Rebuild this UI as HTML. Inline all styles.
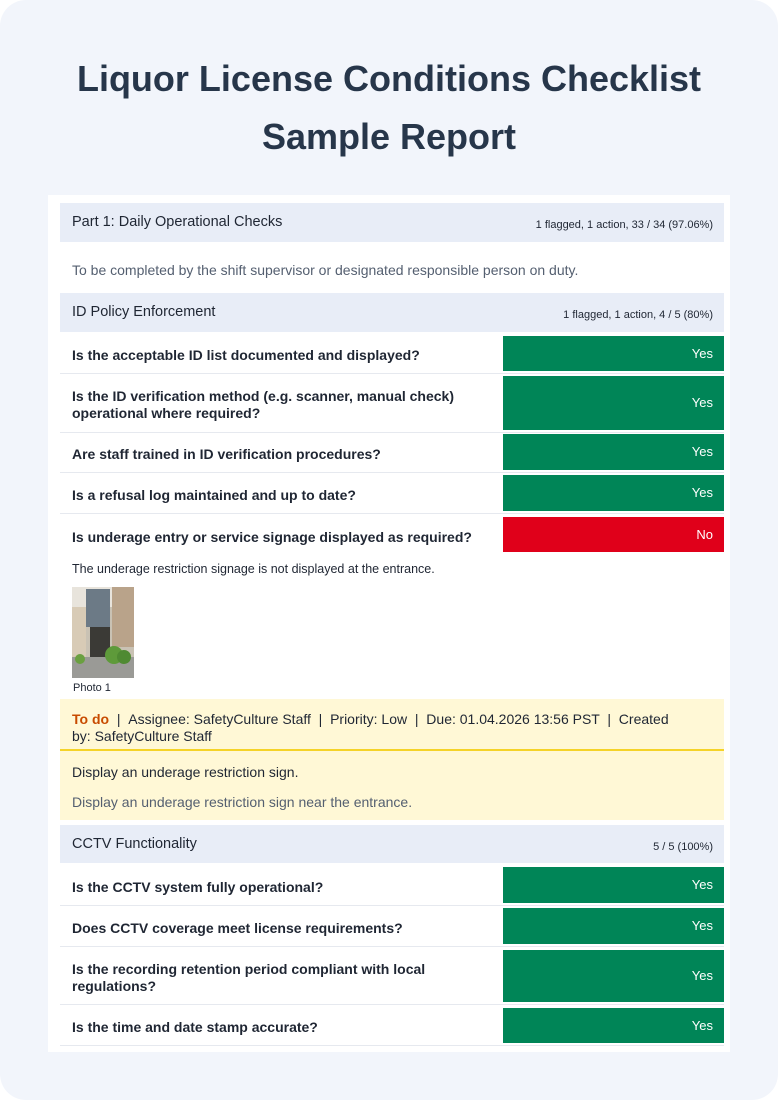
<!DOCTYPE html><html><head><style>
*{margin:0;padding:0;box-sizing:border-box}
body{width:778px;height:1100px;background:#fff;font-family:"Liberation Sans",sans-serif;position:relative;overflow:hidden}
.bg{position:absolute;left:0;top:0;width:778px;height:1100px;background:#f2f5fb;border-radius:26px}
h1{position:absolute;left:0;width:778px;top:50px;text-align:center;font-size:36px;line-height:58px;color:#27364a;font-weight:bold}
.card{position:absolute;left:48px;top:195px;width:682px;height:857px;background:#fff}
.a{position:absolute}
.hdr{position:absolute;left:12px;width:664px;background:#e8edf7;color:#1f2633;font-size:14.5px}
.hdr .t{position:absolute;left:12px;top:11px}
.hdr .s{position:absolute;right:11px;font-size:11px;color:#1f2633}
.q{position:absolute;left:24px;width:420px;font-size:14px;font-weight:bold;color:#1f2633;line-height:17px}
.ans{position:absolute;left:455px;width:221px;color:#fff;font-size:13px;text-align:right;padding-right:11px}
.g{background:#008557}.r{background:#e0001a}
.ln{position:absolute;left:12px;width:664px;height:1px;background:#e6e9ef}
</style></head><body>
<div class="bg"></div>
<h1>Liquor License Conditions Checklist<br>Sample Report</h1>
<div class="card">
<div class="hdr" style="top:8px;height:39px"><span class="t">Part 1: Daily Operational Checks</span><span class="s" style="top:16px">1 flagged, 1 action, 33 / 34 (97.06%)</span></div>
<div class="a" style="left:24px;top:67px;font-size:14px;color:#545f70">To be completed by the shift supervisor or designated responsible person on duty.</div>
<div class="hdr" style="top:98px;height:39px"><span class="t">ID Policy Enforcement</span><span class="s" style="top:16px">1 flagged, 1 action, 4 / 5 (80%)</span></div>

<div class="q" style="top:152px">Is the acceptable ID list documented and displayed?</div>
<div class="ans g" style="top:141px;height:35px;line-height:35px">Yes</div>
<div class="ln" style="top:178px"></div>
<div class="q" style="top:193px">Is the ID verification method (e.g. scanner, manual check) operational where required?</div>
<div class="ans g" style="top:181px;height:54px;line-height:54px">Yes</div>
<div class="ln" style="top:237px"></div>
<div class="q" style="top:251px">Are staff trained in ID verification procedures?</div>
<div class="ans g" style="top:239px;height:36px;line-height:36px">Yes</div>
<div class="ln" style="top:277px"></div>
<div class="q" style="top:292px">Is a refusal log maintained and up to date?</div>
<div class="ans g" style="top:280px;height:36px;line-height:36px">Yes</div>
<div class="ln" style="top:318px"></div>
<div class="q" style="top:334px">Is underage entry or service signage displayed as required?</div>
<div class="ans r" style="top:322px;height:35px;line-height:35px">No</div>
<div class="a" style="left:24px;top:367px;font-size:12.5px;color:#1f2633">The underage restriction signage is not displayed at the entrance.</div>
<svg class="a" style="left:24px;top:392px" width="62" height="91" viewBox="0 0 62 91">
<rect width="62" height="91" fill="#c9c2b4"/><rect x="0" y="0" width="62" height="20" fill="#e8e4dc"/>
<rect x="14" y="2" width="24" height="38" fill="#6c7a86"/><rect x="40" y="0" width="22" height="60" fill="#b9a38a"/>
<rect x="0" y="20" width="14" height="50" fill="#d8cbb6"/><rect x="18" y="40" width="20" height="30" fill="#3b3a36"/>
<rect x="0" y="70" width="62" height="21" fill="#9a9a96"/><circle cx="42" cy="68" r="9" fill="#5e9a3a"/><circle cx="52" cy="70" r="7" fill="#4f8a32"/><circle cx="8" cy="72" r="5" fill="#6aa040"/></svg>
<div class="a" style="left:25px;top:487px;font-size:11px;color:#1f2633">Photo 1</div>
<div class="a" style="left:12px;top:504px;width:664px;height:52px;background:#fff8d6;border-bottom:2px solid #f5d328;font-size:14px;color:#1f2633;padding:12px 40px 12px 12px;line-height:17px"><b style="color:#c84b00">To do</b> &nbsp;| &nbsp;Assignee: SafetyCulture Staff &nbsp;| &nbsp;Priority: Low &nbsp;| &nbsp;Due: 01.04.2026 13:56 PST &nbsp;| &nbsp;Created by: SafetyCulture Staff</div>
<div class="a" style="left:12px;top:556px;width:664px;height:69px;background:#fff8d6;font-size:14px;padding:13px 12px">
<div style="color:#1f2633">Display an underage restriction sign.</div>
<div style="color:#545f70;margin-top:14px">Display an underage restriction sign near the entrance.</div></div>
<div class="hdr" style="top:630px;height:38px"><span class="t">CCTV Functionality</span><span class="s" style="top:16px">5 / 5 (100%)</span></div>
<div class="q" style="top:684px">Is the CCTV system fully operational?</div>
<div class="ans g" style="top:672px;height:36px;line-height:36px">Yes</div>
<div class="ln" style="top:710px"></div>
<div class="q" style="top:725px">Does CCTV coverage meet license requirements?</div>
<div class="ans g" style="top:713px;height:36px;line-height:36px">Yes</div>
<div class="ln" style="top:751px"></div>
<div class="q" style="top:766px">Is the recording retention period compliant with local regulations?</div>
<div class="ans g" style="top:755px;height:52px;line-height:52px">Yes</div>
<div class="ln" style="top:809px"></div>
<div class="q" style="top:824px">Is the time and date stamp accurate?</div>
<div class="ans g" style="top:813px;height:35px;line-height:35px">Yes</div>
<div class="ln" style="top:850px"></div>
</div>
</body></html>
